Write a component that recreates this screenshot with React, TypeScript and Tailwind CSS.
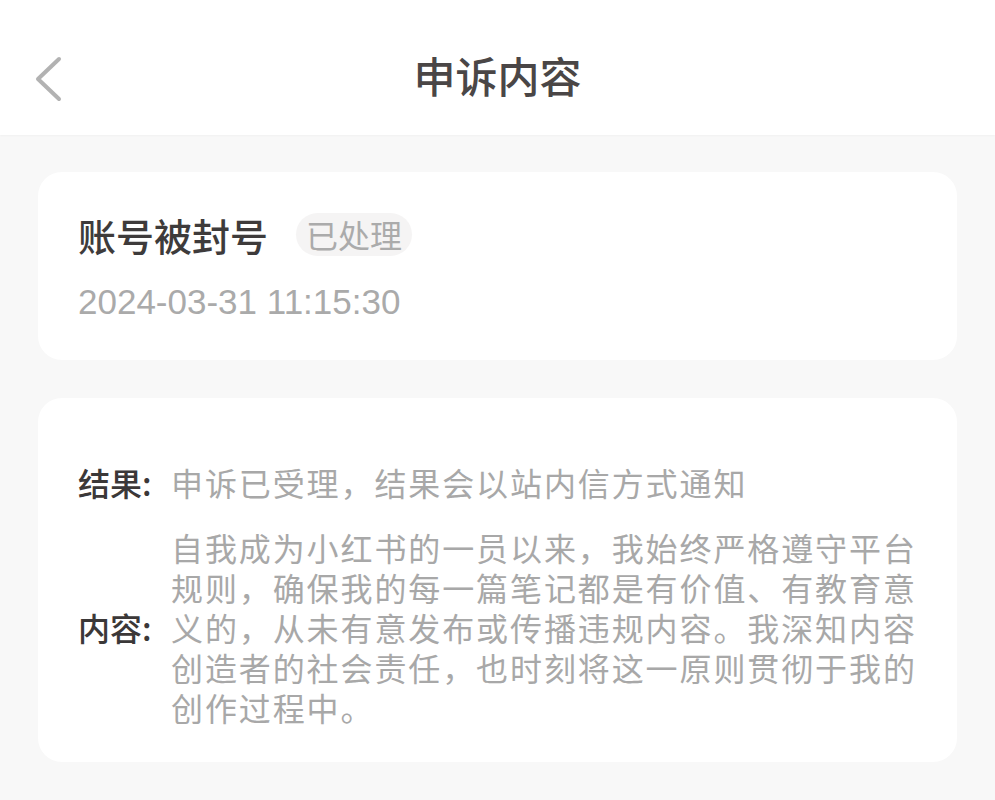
const font = { fontFamily: '"Noto Sans CJK SC", "Noto Sans", sans-serif' };

const contentLines = [
  '自我成为小红书的一员以来，我始终严格遵守平台',
  '规则，确保我的每一篇笔记都是有价值、有教育意',
  '义的，从未有意发布或传播违规内容。我深知内容',
  '创造者的社会责任，也时刻将这一原则贯彻于我的',
  '创作过程中。',
];

export default function App() {
  return (
    <div className="w-[995px] h-[800px] bg-[#f8f8f8] overflow-hidden" style={font}>
      {/* Header */}
      <div className="relative h-[135px] bg-white flex items-center justify-center shadow-[0_1px_2px_rgba(0,0,0,0.03)]">
        <button className="absolute left-[32px] top-[55px] w-[32px] h-[48px] flex items-center justify-center">
          <svg width="30" height="46" viewBox="0 0 30 46" fill="none">
            <path d="M26 3 L5 23 L26 43" stroke="#b2b2b2" strokeWidth="4" strokeLinecap="round" strokeLinejoin="round" />
          </svg>
        </button>
        <h1 className="text-[42px] font-medium text-[#4a4646] mt-[14px]">申诉内容</h1>
      </div>

      {/* Summary card */}
      <div className="mx-[38px] mt-[37px] bg-white rounded-[24px] pl-[40px] pt-[41px] pb-[38px]">
        <div className="flex items-center">
          <span className="text-[38px] font-medium text-[#3e3b3b] leading-[43px]">账号被封号</span>
          <span className="ml-[28px] h-[43px] px-[10px] rounded-full bg-[#f5f4f4] text-[32px] text-[#ababab] leading-[43px]">
            已处理
          </span>
        </div>
        <div
          className="mt-[26px] text-[35px] leading-[40px] text-[#aaaaaa]"
          style={{ fontFamily: '"Liberation Sans", Arial, sans-serif' }}
        >
          2024-03-31 11:15:30
        </div>
      </div>

      {/* Detail card */}
      <div className="mx-[38px] mt-[38px] bg-white rounded-[24px] pl-[40px] pr-[30px] pt-[64px] pb-[35px]">
        <div className="flex items-center">
          <span className="w-[93px] shrink-0 text-[32px] leading-[40px] text-[#3b3838] font-medium">结果:</span>
          <span className="text-[32px] leading-[40px] text-[#a8a8a8] tracking-[1.9px]">
            申诉已受理，结果会以站内信方式通知
          </span>
        </div>
        <div className="flex items-center mt-[25px]">
          <span className="w-[93px] shrink-0 text-[32px] leading-[40px] text-[#3b3838] font-medium">内容:</span>
          <div className="text-[32px] leading-[40px] text-[#a8a8a8] tracking-[1.9px]">
            {contentLines.map((line) => (
              <div key={line} className="whitespace-nowrap">
                {line}
              </div>
            ))}
          </div>
        </div>
      </div>
    </div>
  );
}
